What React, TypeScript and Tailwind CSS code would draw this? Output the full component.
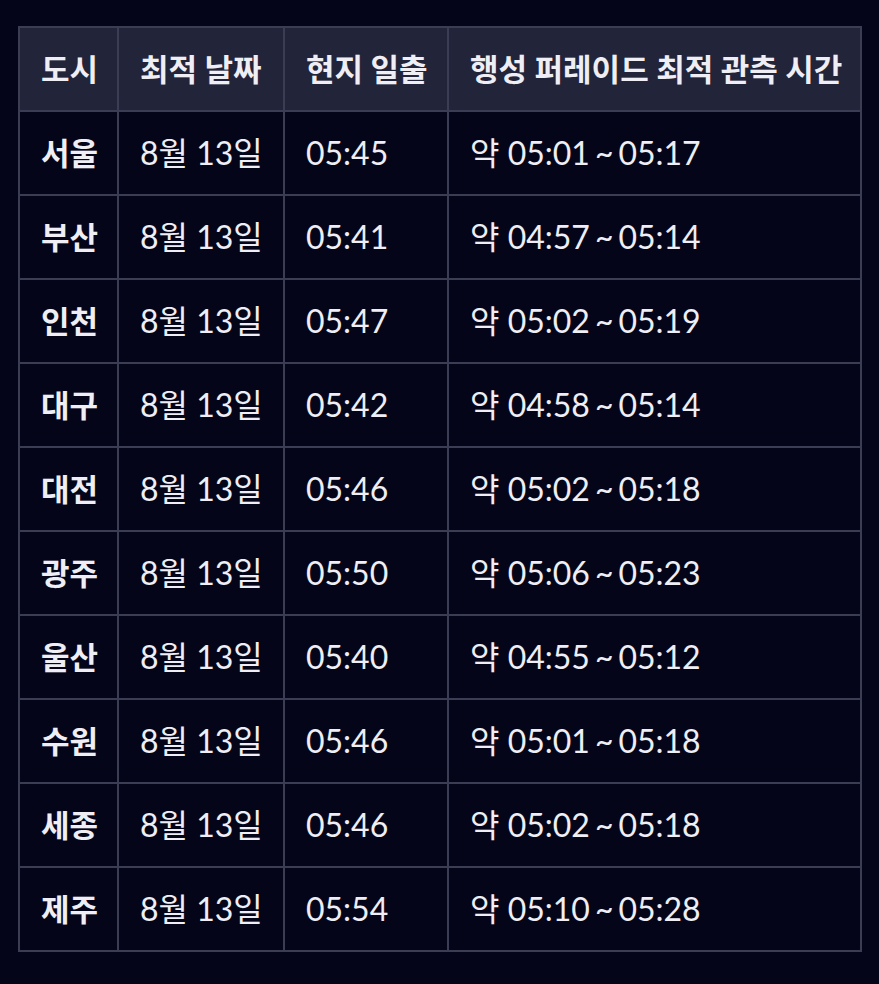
const rows = [
  { city: "서울", date: "8월 13일", sunrise: "05:45", time: "약 05:01~05:17" },
  { city: "부산", date: "8월 13일", sunrise: "05:41", time: "약 04:57~05:14" },
  { city: "인천", date: "8월 13일", sunrise: "05:47", time: "약 05:02~05:19" },
  { city: "대구", date: "8월 13일", sunrise: "05:42", time: "약 04:58~05:14" },
  { city: "대전", date: "8월 13일", sunrise: "05:46", time: "약 05:02~05:18" },
  { city: "광주", date: "8월 13일", sunrise: "05:50", time: "약 05:06~05:23" },
  { city: "울산", date: "8월 13일", sunrise: "05:40", time: "약 04:55~05:12" },
  { city: "수원", date: "8월 13일", sunrise: "05:46", time: "약 05:01~05:18" },
  { city: "세종", date: "8월 13일", sunrise: "05:46", time: "약 05:02~05:18" },
  { city: "제주", date: "8월 13일", sunrise: "05:54", time: "약 05:10~05:28" },
];

// time range: "약 05:01~05:17" -> tilde gets a bit of air on both sides
function TimeRange({ text }: { text: string }) {
  const [from, to] = text.split("~");
  return (
    <>
      {from}
      <span className="mx-[5px]">~</span>
      {to}
    </>
  );
}

export default function App() {
  return (
    <div
      className="min-h-[984px] w-[879px] bg-[#05051a] pt-[26px] pl-[18px] text-[#eeeef4]"
      style={{ fontFamily: "Lato, 'Noto Sans CJK KR', sans-serif" }}
    >
      <table className="border-collapse border-2 border-[#3b3d55] text-[32px] leading-none">
        <thead>
          <tr className="h-[84px] bg-[#22243a] text-[31px]">
            <th className="w-[99px] border-2 border-[#3b3d55] pl-[21px] text-left font-bold">도시</th>
            <th className="w-[166px] border-2 border-[#3b3d55] pl-[21px] text-left font-bold">최적 날짜</th>
            <th className="w-[164px] border-2 border-[#3b3d55] pl-[21px] text-left font-bold">현지 일출</th>
            <th className="w-[413px] border-2 border-[#3b3d55] pl-[21px] text-left font-bold">행성 퍼레이드 최적 관측 시간</th>
          </tr>
        </thead>
        <tbody>
          {rows.map((r) => (
            <tr key={r.city} className="h-[84px]">
              <td className="border-2 border-[#3b3d55] pl-[21px] text-[31px] font-bold">{r.city}</td>
              <td className="border-2 border-[#3b3d55] pl-[21px]">{r.date}</td>
              <td className="border-2 border-[#3b3d55] pl-[21px]">{r.sunrise}</td>
              <td className="border-2 border-[#3b3d55] pl-[21px]">
                <TimeRange text={r.time} />
              </td>
            </tr>
          ))}
        </tbody>
      </table>
    </div>
  );
}
